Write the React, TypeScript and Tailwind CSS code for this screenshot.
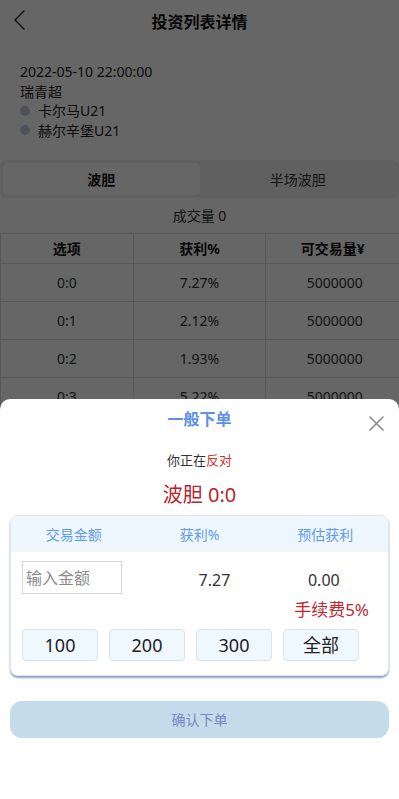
import React from "react";

const rows = [
  ["0:0", "7.27%", "5000000"],
  ["0:1", "2.12%", "5000000"],
  ["0:2", "1.93%", "5000000"],
  ["0:3", "5.22%", "5000000"],
];

export default function App() {
  return (
    <div
      className="relative h-[799px] w-full overflow-hidden bg-white text-[#222]"
      style={{ fontFamily: '"Noto Sans", "Noto Sans CJK SC", sans-serif' }}
    >
      {/* Header */}
      <div className="relative flex h-[44px] items-center justify-center">
        <svg className="absolute left-[12px] top-[9px]" width="16" height="22" viewBox="0 0 16 22">
          <path d="M12 2 L3 11 L12 20" fill="none" stroke="#222" strokeWidth="1.4" strokeLinecap="round" strokeLinejoin="round" />
        </svg>
        <span className="text-[16px] font-bold leading-[22px] text-[#111]">投资列表详情</span>
      </div>

      {/* Info */}
      <div className="px-[20px] pt-[18px] text-[14px] leading-[19.5px] text-[#222]">
        <div>2022-05-10 22:00:00</div>
        <div>瑞青超</div>
        <div className="flex items-center">
          <span className="mr-[8px] h-[10px] w-[10px] rounded-full bg-[#c3cbd9]" />
          <span>卡尔马U21</span>
        </div>
        <div className="flex items-center">
          <span className="mr-[8px] h-[10px] w-[10px] rounded-full bg-[#c3cbd9]" />
          <span>赫尔辛堡U21</span>
        </div>
      </div>

      {/* Tabs */}
      <div className="mt-[20px] flex h-[38px] items-stretch rounded-[6px] bg-[#f1f1f1] p-[3px]">
        <div className="flex flex-1 items-center justify-center rounded-[5px] bg-white text-[14px] font-bold text-[#111]">
          波胆
        </div>
        <div className="flex flex-1 items-center justify-center text-[14px] text-[#333]">半场波胆</div>
      </div>

      <div className="flex h-[35px] items-center justify-center text-[14px] text-[#333]">成交量 0</div>

      {/* Table */}
      <div className="border-l border-t border-[#dcdcdc] text-[14px]">
        <div className="grid h-[30px] grid-cols-3 border-b border-[#dcdcdc] font-bold text-[#111]">
          <div className="flex items-center justify-center border-r border-[#dcdcdc]">选项</div>
          <div className="flex items-center justify-center border-r border-[#dcdcdc]">获利%</div>
          <div className="flex items-center justify-center">可交易量¥</div>
        </div>
        {rows.map((r, i) => (
          <div key={i} className="grid h-[38px] grid-cols-3 border-b border-[#dcdcdc] text-[#333]">
            <div className="flex items-center justify-center border-r border-[#dcdcdc]">{r[0]}</div>
            <div className="flex items-center justify-center border-r border-[#dcdcdc]">{r[1]}</div>
            <div className="flex items-center justify-center pl-[4px]">{r[2]}</div>
          </div>
        ))}
      </div>

      {/* Overlay */}
      <div className="absolute inset-0 bg-black/60" />

      {/* Bottom sheet */}
      <div className="absolute bottom-0 left-0 right-0 h-[400px] rounded-t-[10px] bg-white">
        <div className="relative pt-[9px] text-center">
          <div className="text-[16px] font-bold leading-[22px] text-[#5b8fe8]">一般下单</div>
          <svg className="absolute right-[15px] top-[17px]" width="15" height="15" viewBox="0 0 15 15">
            <path d="M1 1 L14 14 M14 1 L1 14" stroke="#8a8a8a" strokeWidth="1.6" strokeLinecap="round" />
          </svg>
        </div>
        <div className="mt-[21px] text-center text-[13px] leading-[18px] text-[#333]">
          你正在<span className="text-[#d0342c]">反对</span>
        </div>
        <div className="mt-[13px] text-center text-[20px] leading-[26px] text-[#b8262b]">波胆 0:0</div>

        {/* Card */}
        <div className="mx-[10px] mt-[7px] overflow-hidden rounded-[8px] border border-[#e1e4ea] shadow-[0_2px_2px_#8c9cc8]">
          <div className="grid h-[36px] grid-cols-3 bg-[#eef6fe] text-[14px] text-[#5f9bef]">
            <div className="flex items-center justify-center">交易金额</div>
            <div className="flex items-center justify-center">获利%</div>
            <div className="flex items-center justify-center">预估获利</div>
          </div>
          <div className="px-[11px] pb-[14px] pt-[9px]">
            <div className="grid h-[33px] grid-cols-3 items-center">
              <div className="flex h-[33px] w-[100px] items-center border border-[#d6d6d6] pl-[3px] text-[16px] text-[#8a8a8a]">
                输入金额
              </div>
              <div className="pl-[30px] pt-[4px] text-center text-[16px] text-[#333]">7.27</div>
              <div className="pl-[12px] pt-[4px] text-center text-[16px] text-[#333]">0.00</div>
            </div>
            <div className="mt-[6px] pr-[8px] text-right text-[17px] leading-[20px] text-[#c3272c]">手续费5%</div>
            <div className="mt-[9px] flex gap-[11px]">
              {["100", "200", "300", "全部"].map((t) => (
                <div
                  key={t}
                  className="flex h-[32px] w-[76px] items-center justify-center rounded-[4px] border border-[#d9e3ee] bg-[#eff7ff] text-[18px] text-[#222]"
                >
                  {t}
                </div>
              ))}
            </div>
          </div>
        </div>

        <div className="mx-[10px] mt-[25px] flex h-[37px] items-center justify-center rounded-[12px] bg-[#c4dbea] text-[14px] text-[#7688c2]">
          确认下单
        </div>
      </div>
    </div>
  );
}
